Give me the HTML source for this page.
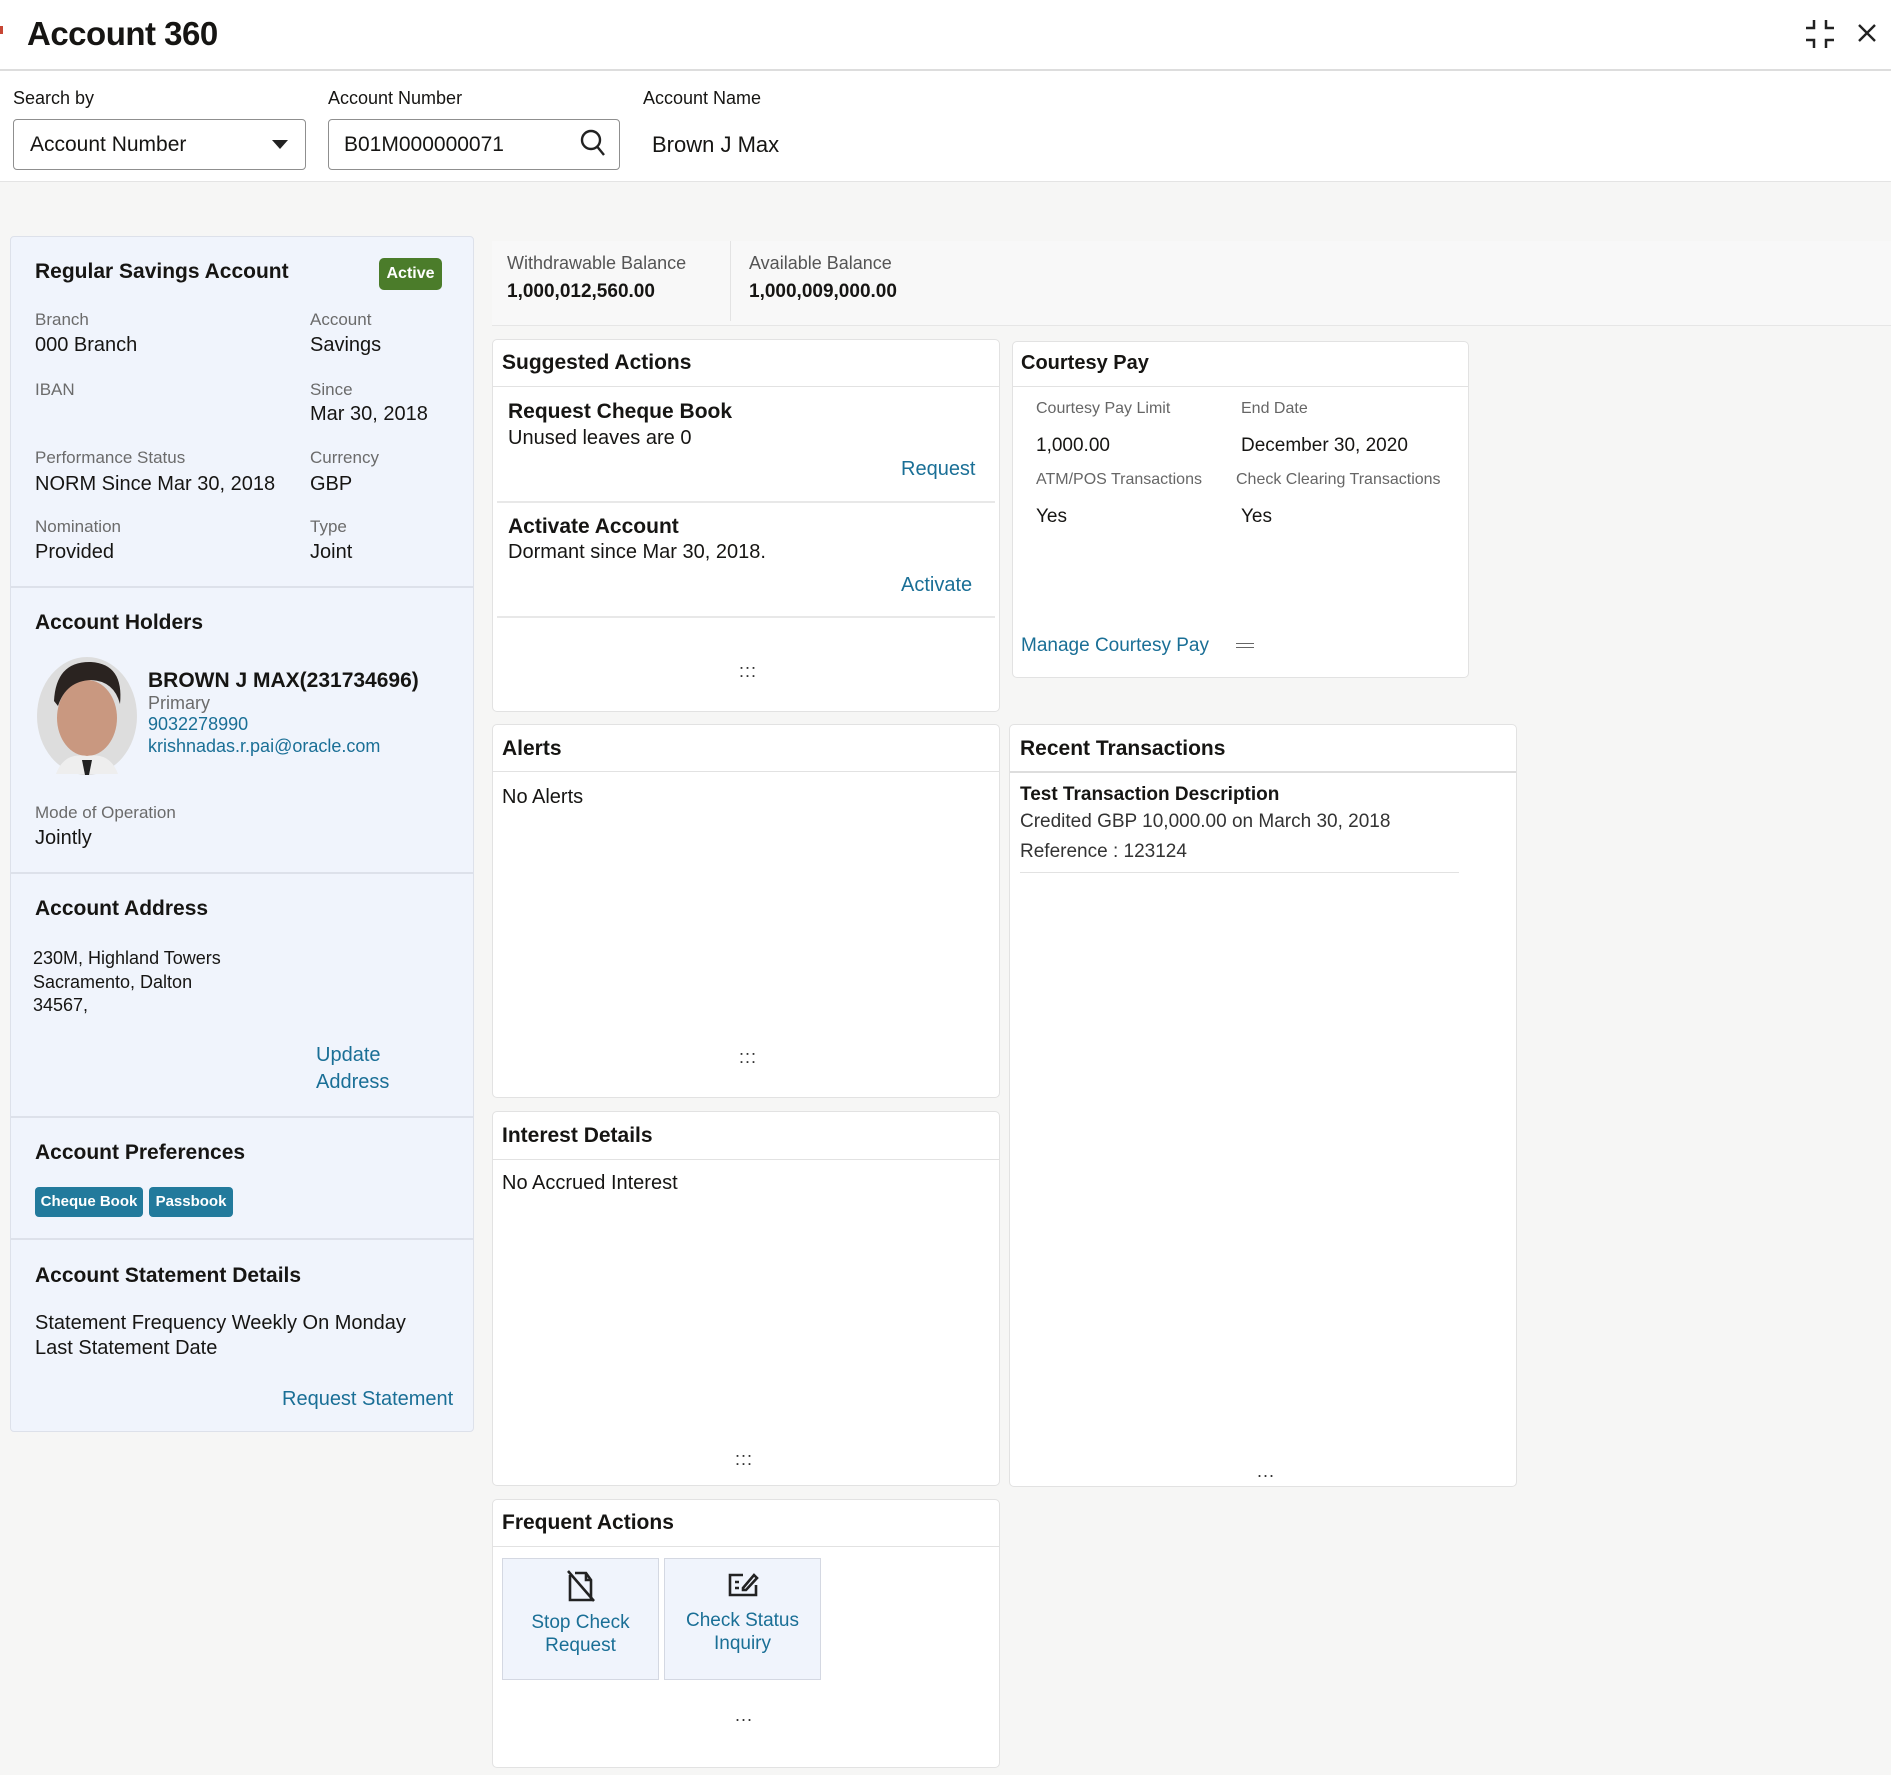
<!DOCTYPE html>
<html><head><meta charset="utf-8"><style>
*{margin:0;padding:0;box-sizing:border-box}
body{width:1891px;height:1775px;position:relative;overflow:hidden;font-family:"Liberation Sans",sans-serif;color:#161513;background:#f6f6f5}
.a{position:absolute;white-space:nowrap;line-height:1}
.top{position:absolute;left:0;top:0;width:1891px;height:182px;background:#fff;border-bottom:1px solid #e4e4e4}
.card{position:absolute;background:#fff;border:1px solid #e2e2e2;border-radius:5px}
.lbl{font-size:17px;color:#6b6b6b}
.val{font-size:20px;color:#161513}
.h{font-size:21px;font-weight:bold}
.lnk{font-size:20px;color:#1a6f96}
.hl{position:absolute;height:1px;background:#e2e2e2}
.dots{font-size:18px;letter-spacing:1px;color:#333}
.tile{position:absolute;background:#f0f4fc;border:1px solid #d4d8e2;text-align:center;color:#1a6f96;font-size:19px;line-height:23px}
</style></head><body>
<div class="top"></div>
<div class="a" style="left:27px;top:17px;font-size:33px;font-weight:bold;letter-spacing:-0.5px">Account 360</div>
<div class="a" style="left:0;top:26px;width:3px;height:8px;background:#c74634"></div>
<svg class="a" style="left:1804px;top:18px" width="32" height="32" viewBox="0 0 32 32" fill="none" stroke="#222" stroke-width="2.5"><path d="M10 2v8H2M22 2v8h8M10 30v-8H2M22 30v-8h8"/></svg>
<svg class="a" style="left:1858px;top:24px" width="18" height="18" viewBox="0 0 18 18" stroke="#222" stroke-width="2.4"><path d="M1 1L17 17M17 1L1 17"/></svg>
<div class="hl" style="left:0;top:69px;width:1891px;height:2px;background:#ddd"></div>
<div class="a" style="left:13px;top:89px;font-size:18px">Search by</div>
<div class="a" style="left:328px;top:89px;font-size:18px">Account Number</div>
<div class="a" style="left:643px;top:89px;font-size:18px">Account Name</div>
<div class="a" style="left:13px;top:119px;width:293px;height:51px;border:1px solid #8f8f8f;border-radius:4px;background:#fff"></div>
<div class="a" style="left:30px;top:134px;font-size:21px">Account Number</div>
<div class="a" style="left:272px;top:140px;width:0;height:0;border-left:8px solid transparent;border-right:8px solid transparent;border-top:9px solid #222"></div>
<div class="a" style="left:328px;top:119px;width:292px;height:51px;border:1px solid #8f8f8f;border-radius:4px;background:#fff"></div>
<div class="a" style="left:344px;top:134px;font-size:21px">B01M000000071</div>
<svg class="a" style="left:580px;top:129px" width="26" height="28" viewBox="0 0 26 28" fill="none" stroke="#222" stroke-width="2.4"><circle cx="11" cy="11" r="9"/><path d="M17.5 18L24 26"/></svg>
<div class="a" style="left:652px;top:134px;font-size:22px">Brown J Max</div>

<!-- left card -->
<div class="a" style="left:10px;top:236px;width:464px;height:1196px;background:#f0f4fc;border:1px solid #dde1ea;border-radius:4px"></div>
<div class="a h" style="left:35px;top:261px">Regular Savings Account</div>
<div class="a" style="left:379px;top:258px;width:63px;height:32px;background:#4b7c2a;border-radius:5px;color:#fff;font-size:16px;font-weight:bold;text-align:center;line-height:32px">Active</div>
<div class="a lbl" style="left:35px;top:311px">Branch</div><div class="a val" style="left:35px;top:335px">000 Branch</div>
<div class="a lbl" style="left:310px;top:311px">Account</div><div class="a val" style="left:310px;top:335px">Savings</div>
<div class="a lbl" style="left:35px;top:381px">IBAN</div>
<div class="a lbl" style="left:310px;top:381px">Since</div><div class="a val" style="left:310px;top:404px">Mar 30, 2018</div>
<div class="a lbl" style="left:35px;top:449px">Performance Status</div><div class="a val" style="left:35px;top:474px">NORM Since Mar 30, 2018</div>
<div class="a lbl" style="left:310px;top:449px">Currency</div><div class="a val" style="left:310px;top:474px">GBP</div>
<div class="a lbl" style="left:35px;top:518px">Nomination</div><div class="a val" style="left:35px;top:542px">Provided</div>
<div class="a lbl" style="left:310px;top:518px">Type</div><div class="a val" style="left:310px;top:542px">Joint</div>
<div class="hl" style="left:10px;top:586px;width:464px;height:2px;background:#dde1ea"></div>
<div class="a h" style="left:35px;top:612px">Account Holders</div>
<svg class="a" style="left:36px;top:656px" width="102" height="120" viewBox="0 0 102 120"><ellipse cx="51" cy="60" rx="50" ry="59" fill="#ddd"/><ellipse cx="51" cy="62" rx="30" ry="38" fill="#c99880"/><path d="M18 45Q20 5 55 6Q88 8 84 48Q78 25 55 24Q30 25 22 50Z" fill="#2a2320"/><path d="M20 118Q28 96 51 100Q74 96 82 118Z" fill="#eee"/><path d="M46 104L56 104L53 119L49 119Z" fill="#222"/></svg>
<div class="a" style="left:148px;top:670px;font-size:21px;font-weight:bold">BROWN J MAX(231734696)</div>
<div class="a" style="left:148px;top:694px;font-size:18px;color:#6b6b6b">Primary</div>
<div class="a" style="left:148px;top:715px;font-size:18px;color:#1a6f96">9032278990</div>
<div class="a" style="left:148px;top:737px;font-size:18px;color:#1a6f96">krishnadas.r.pai@oracle.com</div>
<div class="a lbl" style="left:35px;top:804px">Mode of Operation</div><div class="a val" style="left:35px;top:828px">Jointly</div>
<div class="hl" style="left:10px;top:872px;width:464px;height:2px;background:#dde1ea"></div>
<div class="a h" style="left:35px;top:898px">Account Address</div>
<div class="a" style="left:33px;top:949px;font-size:18px">230M, Highland Towers</div>
<div class="a" style="left:33px;top:973px;font-size:18px">Sacramento, Dalton</div>
<div class="a" style="left:33px;top:996px;font-size:18px">34567,</div>
<div class="a lnk" style="left:316px;top:1045px">Update</div>
<div class="a lnk" style="left:316px;top:1072px">Address</div>
<div class="hl" style="left:10px;top:1116px;width:464px;height:2px;background:#dde1ea"></div>
<div class="a h" style="left:35px;top:1142px">Account Preferences</div>
<div class="a" style="left:35px;top:1187px;width:108px;height:30px;background:#227a9c;border-radius:4px;color:#fff;font-size:15px;font-weight:bold;text-align:center;line-height:30px">Cheque Book</div>
<div class="a" style="left:149px;top:1187px;width:84px;height:30px;background:#227a9c;border-radius:4px;color:#fff;font-size:15px;font-weight:bold;text-align:center;line-height:30px">Passbook</div>
<div class="hl" style="left:10px;top:1238px;width:464px;height:2px;background:#dde1ea"></div>
<div class="a h" style="left:35px;top:1265px">Account Statement Details</div>
<div class="a val" style="left:35px;top:1313px">Statement Frequency Weekly On Monday</div>
<div class="a val" style="left:35px;top:1338px">Last Statement Date</div>
<div class="a lnk" style="left:282px;top:1389px">Request Statement</div>

<!-- balances -->
<div class="a" style="left:492px;top:241px;width:1399px;height:85px;background:#f8f8f8;border-bottom:1px solid #e6e6e6"></div>
<div class="a" style="left:730px;top:241px;width:1px;height:80px;background:#e3e3e3"></div>
<div class="a" style="left:507px;top:254px;font-size:18px;color:#555">Withdrawable Balance</div>
<div class="a" style="left:507px;top:282px;font-size:19px;font-weight:bold">1,000,012,560.00</div>
<div class="a" style="left:749px;top:254px;font-size:18px;color:#555">Available Balance</div>
<div class="a" style="left:749px;top:282px;font-size:19px;font-weight:bold">1,000,009,000.00</div>

<!-- suggested -->
<div class="card" style="left:492px;top:339px;width:508px;height:373px"></div>
<div class="a h" style="left:502px;top:352px">Suggested Actions</div>
<div class="hl" style="left:493px;top:386px;width:506px"></div>
<div class="a" style="left:508px;top:401px;font-size:21px;font-weight:bold">Request Cheque Book</div>
<div class="a val" style="left:508px;top:428px">Unused leaves are 0</div>
<div class="a lnk" style="left:901px;top:459px">Request</div>
<div class="hl" style="left:497px;top:501px;width:498px;height:2px;background:#e8e8e8"></div>
<div class="a" style="left:508px;top:516px;font-size:21px;font-weight:bold">Activate Account</div>
<div class="a val" style="left:508px;top:542px">Dormant since Mar 30, 2018.</div>
<div class="a lnk" style="left:901px;top:575px">Activate</div>
<div class="hl" style="left:497px;top:616px;width:498px;height:2px;background:#e8e8e8"></div>
<div class="a dots" style="left:739px;top:662px">:::</div>

<!-- courtesy -->
<div class="card" style="left:1012px;top:341px;width:457px;height:337px"></div>
<div class="a" style="left:1021px;top:353px;font-size:20px;font-weight:bold">Courtesy Pay</div>
<div class="hl" style="left:1013px;top:386px;width:455px"></div>
<div class="a" style="left:1036px;top:401px;font-size:16px;color:#666">Courtesy Pay Limit</div>
<div class="a" style="left:1241px;top:401px;font-size:16px;color:#666">End Date</div>
<div class="a" style="left:1036px;top:436px;font-size:19px">1,000.00</div>
<div class="a" style="left:1241px;top:436px;font-size:19px">December 30, 2020</div>
<div class="a" style="left:1036px;top:472px;font-size:16px;color:#666">ATM/POS Transactions</div>
<div class="a" style="left:1236px;top:472px;font-size:16px;color:#666">Check Clearing Transactions</div>
<div class="a" style="left:1036px;top:507px;font-size:19px">Yes</div>
<div class="a" style="left:1241px;top:507px;font-size:19px">Yes</div>
<div class="a" style="left:1021px;top:636px;font-size:19px;color:#1a6f96">Manage Courtesy Pay</div>
<div class="a" style="left:1236px;top:643px;width:18px;height:5px;border-top:1.5px solid #666;border-bottom:1.5px solid #666"></div>

<!-- alerts -->
<div class="card" style="left:492px;top:724px;width:508px;height:374px"></div>
<div class="a h" style="left:502px;top:738px">Alerts</div>
<div class="hl" style="left:493px;top:771px;width:506px"></div>
<div class="a val" style="left:502px;top:787px">No Alerts</div>
<div class="a dots" style="left:739px;top:1048px">:::</div>

<!-- recent -->
<div class="card" style="left:1009px;top:724px;width:508px;height:763px"></div>
<div class="a h" style="left:1020px;top:738px">Recent Transactions</div>
<div class="hl" style="left:1010px;top:771px;width:506px;height:2px;background:#ddd"></div>
<div class="a" style="left:1020px;top:785px;font-size:19px;font-weight:bold">Test Transaction Description</div>
<div class="a" style="left:1020px;top:812px;font-size:19px;color:#333">Credited GBP 10,000.00 on March 30, 2018</div>
<div class="a" style="left:1020px;top:842px;font-size:19px;color:#333">Reference : 123124</div>
<div class="hl" style="left:1020px;top:872px;width:439px"></div>
<div class="a dots" style="left:1257px;top:1462px">...</div>

<!-- interest -->
<div class="card" style="left:492px;top:1111px;width:508px;height:375px"></div>
<div class="a h" style="left:502px;top:1125px">Interest Details</div>
<div class="hl" style="left:493px;top:1159px;width:506px"></div>
<div class="a val" style="left:502px;top:1173px">No Accrued Interest</div>
<div class="a dots" style="left:735px;top:1450px">:::</div>

<!-- frequent -->
<div class="card" style="left:492px;top:1499px;width:508px;height:269px"></div>
<div class="a h" style="left:502px;top:1512px">Frequent Actions</div>
<div class="hl" style="left:493px;top:1546px;width:506px"></div>
<div class="tile" style="left:502px;top:1558px;width:157px;height:122px"><svg style="display:block;margin:10px auto 8px" width="30" height="34" viewBox="0 0 30 34" fill="none" stroke="#222" stroke-width="2.6"><path d="M4 6V31H25V11L20 4H9"/><path d="M20 4V11H25"/><path d="M2 2L28 32"/></svg>Stop Check<br>Request</div>
<div class="tile" style="left:664px;top:1558px;width:157px;height:122px"><svg style="display:block;margin:12px auto 10px" width="32" height="28" viewBox="0 0 32 28" fill="none" stroke="#222" stroke-width="2.6"><path d="M16 4H3V24H29V14"/><path d="M8 11H12M8 17H12"/><path d="M16 17L27 4L30 7L19 19H16Z"/></svg>Check Status<br>Inquiry</div>
<div class="a dots" style="left:735px;top:1706px">...</div>
</body></html>
